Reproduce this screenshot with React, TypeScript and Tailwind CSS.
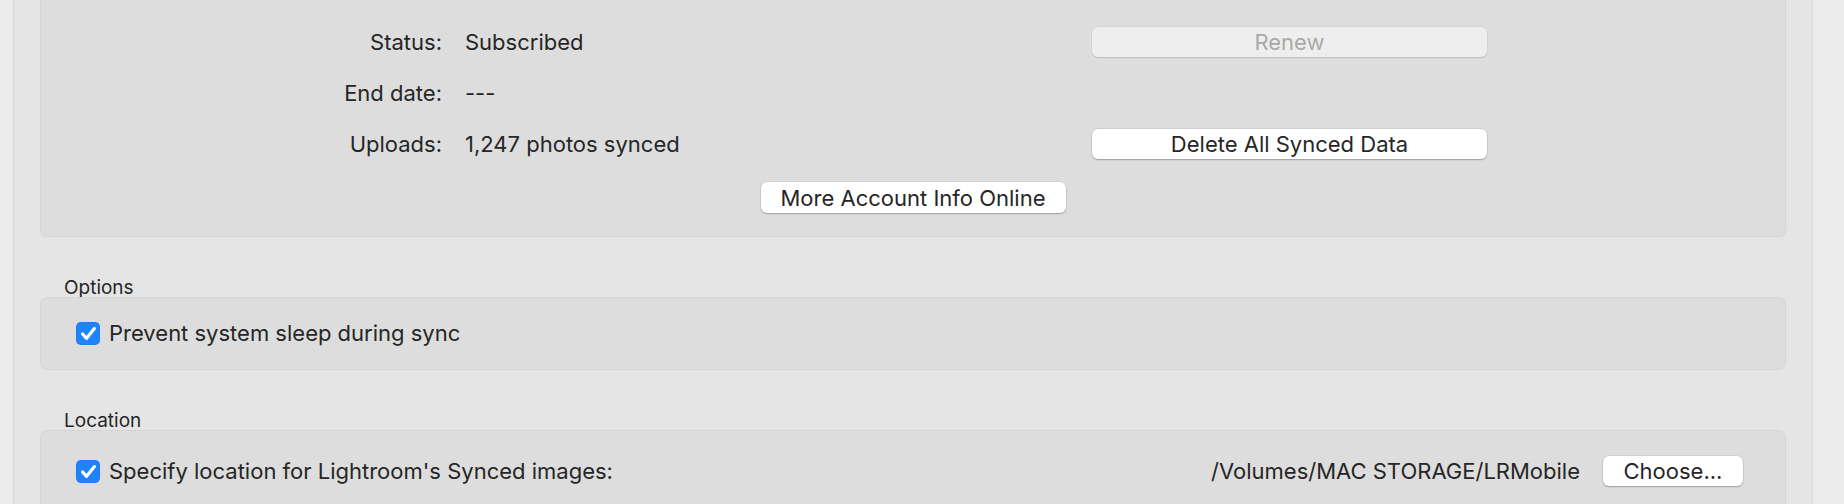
import * as React from "react"

const font = "font-['Inter','Noto_Sans',sans-serif]"

function MacButton({ children, disabled = false, className = "" }: { children: React.ReactNode; disabled?: boolean; className?: string }) {
    return (
        <button
            type="button"
            className={
                "flex h-[30px] items-center justify-center rounded-[6px] text-[22px] leading-none " +
                (disabled
                    ? "bg-[#eeeeee] text-[#a9a9a9] shadow-[0_1px_1px_rgba(0,0,0,0.12),0_0_0_0.5px_rgba(0,0,0,0.06)]"
                    : "bg-white text-[#262626] shadow-[0_1px_1.5px_rgba(0,0,0,0.25),0_0_0_0.5px_rgba(0,0,0,0.1)]") +
                " " +
                className
            }
        >
            {children}
        </button>
    )
}

function Checkbox() {
    return (
        <span className="flex h-[23px] w-[24px] shrink-0 items-center justify-center rounded-[5px] bg-[#1f84fb] shadow-[inset_0_0_0_0.5px_rgba(0,0,0,0.12)]">
            <svg width="17" height="15" viewBox="0 0 17 15" fill="none">
                <path d="M2.6 8 L6.6 12.3 L14.4 2.6" stroke="white" strokeWidth="3.2" strokeLinecap="round" strokeLinejoin="round" />
            </svg>
        </span>
    )
}

function InfoRow({ label, value, action }: { label: string; value: string; action?: React.ReactNode }) {
    return (
        <div className="flex h-[30px] items-center">
            <span className="w-[401px] text-right">{label}</span>
            <span className="ml-[23px] w-[627px]">{value}</span>
            <div className="w-[395px]">{action}</div>
        </div>
    )
}

function SectionLabel({ children }: { children: React.ReactNode }) {
    return <div className="mt-[38px] h-[22px] pl-[24px] text-[19px] leading-[25px] text-[#262626]">{children}</div>
}

export default function App() {
    return (
        <div className={`flex h-[504px] w-[1844px] overflow-hidden bg-[#e5e5e5] text-[22px] text-[#262626] ${font}`}>
            <div className="w-[14px] shrink-0 border-r border-[#dadada] bg-[#ececec]" />

            <main className="flex min-w-0 flex-1 flex-col px-[26px]">
                <section className="flex flex-col rounded-b-[7px] border border-t-0 border-[#d5d5d5] bg-[#dddddd] pt-[27px] pb-[23px]">
                    <div className="flex flex-col gap-[21px]">
                        <InfoRow label="Status:" value="Subscribed" action={<MacButton disabled className="w-full">Renew</MacButton>} />
                        <InfoRow label="End date:" value="---" />
                        <InfoRow label="Uploads:" value="1,247 photos synced" action={<MacButton className="w-full">Delete All Synced Data</MacButton>} />
                    </div>
                    <MacButton className="mt-[23px] h-[31px] w-[305px] self-center">More Account Info Online</MacButton>
                </section>

                <SectionLabel>Options</SectionLabel>
                <section className="flex h-[73px] items-center gap-[9px] rounded-[7px] border border-[#d5d5d5] bg-[#dddddd] pl-[35px]">
                    <Checkbox />
                    <span>Prevent system sleep during sync</span>
                </section>

                <SectionLabel>Location</SectionLabel>
                <section className="flex-1 rounded-t-[7px] border border-b-0 border-[#d5d5d5] bg-[#dddddd] pt-[25px] pr-[42px] pl-[35px]">
                    <div className="flex h-[30px] items-center">
                        <Checkbox />
                        <span className="ml-[9px]">Specify location for Lightroom's Synced images:</span>
                        <span className="ml-auto">/Volumes/MAC STORAGE/LRMobile</span>
                        <MacButton className="ml-[23px] w-[140px]">Choose...</MacButton>
                    </div>
                </section>
            </main>

            <div className="w-[32px] shrink-0 border-l border-[#dadada] bg-[#ececec]" />
        </div>
    )
}
